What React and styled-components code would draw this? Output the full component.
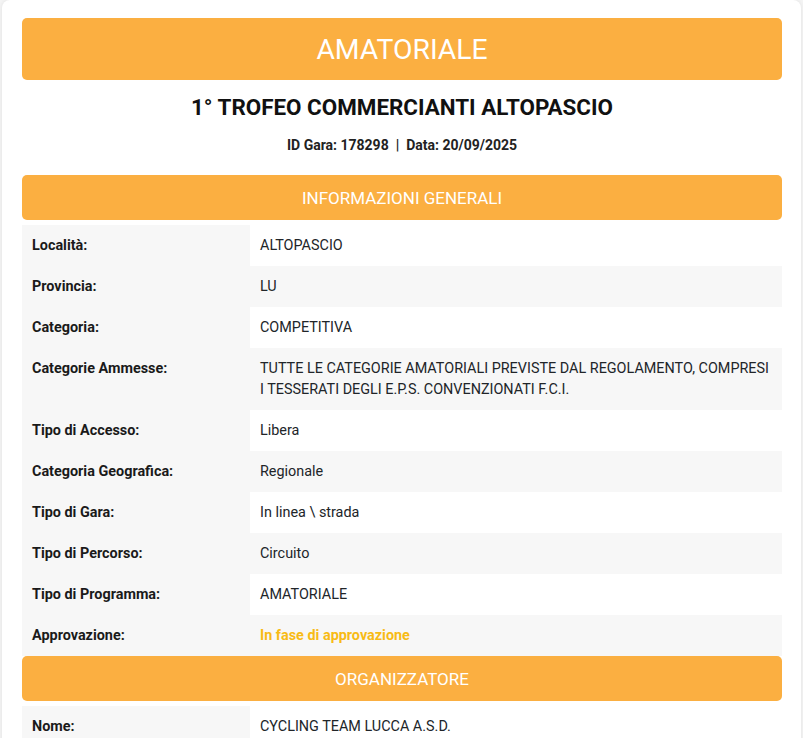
import React from 'react'
import styled, { createGlobalStyle } from 'styled-components'

const GlobalStyle = createGlobalStyle`
    body {
        margin: 0;
        background: #f4f4f4;
        font-family: Roboto, "Liberation Sans", sans-serif;
        color: #212529;
    }
`

const general = [
    ['Località', 'ALTOPASCIO'],
    ['Provincia', 'LU'],
    ['Categoria', 'COMPETITIVA'],
    ['Categorie Ammesse', 'TUTTE LE CATEGORIE AMATORIALI PREVISTE DAL REGOLAMENTO, COMPRESI I TESSERATI DEGLI E.P.S. CONVENZIONATI F.C.I.'],
    ['Tipo di Accesso', 'Libera'],
    ['Categoria Geografica', 'Regionale'],
    ['Tipo di Gara', 'In linea \\ strada'],
    ['Tipo di Percorso', 'Circuito'],
    ['Tipo di Programma', 'AMATORIALE'],
    ['Approvazione', 'In fase di approvazione', true],
]

const organizer = [
    ['Nome', 'CYCLING TEAM LUCCA A.S.D.'],
]

function InfoTable({ rows }) {
    return (
        <Table>
            <tbody>
                {rows.map(([label, value, pending]) => (
                    <tr key={label}>
                        <Th>{label}:</Th>
                        <Td $pending={pending}>{value}</Td>
                    </tr>
                ))}
            </tbody>
        </Table>
    )
}

function App() {
    return (
        <>
            <GlobalStyle />
            <Card>
                <Banner>AMATORIALE</Banner>
                <Title>1° TROFEO COMMERCIANTI ALTOPASCIO</Title>
                <Meta>ID Gara: 178298 &nbsp;|&nbsp; Data: 20/09/2025</Meta>
                <SectionHeader>INFORMAZIONI GENERALI</SectionHeader>
                <InfoTable rows={general} />
                <SectionHeader $flush>ORGANIZZATORE</SectionHeader>
                <InfoTable rows={organizer} />
            </Card>
        </>
    )
}

export default App

const Card = styled.div`
    margin: 0 2px;
    background: #fff;
    border-radius: 8px;
    box-shadow: 0 0 4px rgba(0, 0, 0, 0.08);
    padding: 18px 19px 20px 20px;
    min-height: 760px;
`
const Banner = styled.div`
    background: #fbaf41;
    color: #fff;
    border-radius: 5px;
    height: 62px;
    display: flex;
    align-items: center;
    justify-content: center;
    font-size: 28.3px;
    font-weight: 400;
`
const Title = styled.h2`
    margin: 14px 0 0;
    text-align: center;
    font-size: 22.4px;
    font-weight: 700;
    line-height: 27px;
    color: #111;
`
const Meta = styled.p`
    margin: 14px 0 0;
    text-align: center;
    font-size: 14px;
    font-weight: 700;
    line-height: 20px;
    color: #222;
`
const SectionHeader = styled.div`
    margin-top: ${p => (p.$flush ? '0' : '20px')};
    margin-bottom: 5px;
    background: #fbaf41;
    color: #fff;
    border-radius: 5px;
    height: 45px;
    display: flex;
    align-items: center;
    justify-content: center;
    font-size: 17px;
    font-weight: 400;
`
const Table = styled.table`
    width: 100%;
    border-collapse: collapse;
    font-size: 14.4px;
    line-height: 21px;
    tr:nth-child(even) td {
        background: #f7f7f7;
    }
`
const Th = styled.th`
    width: 30%;
    text-align: left;
    vertical-align: top;
    font-weight: 700;
    background: #f7f7f7;
    padding: 10px;
    color: #1a1a1a;
`
const Td = styled.td`
    vertical-align: top;
    padding: 10px;
    background: #fff;
    color: ${p => (p.$pending ? '#f8bb15' : '#212529')};
    font-weight: ${p => (p.$pending ? 700 : 400)};
`
